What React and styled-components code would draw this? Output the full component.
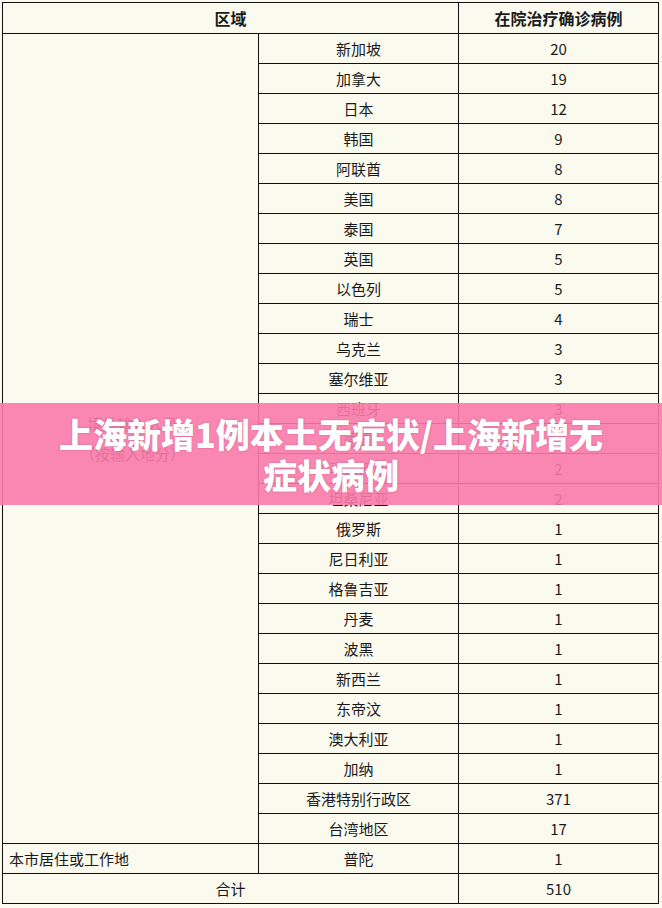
import React from 'react'
import styled, { createGlobalStyle } from 'styled-components'

const GlobalStyle = createGlobalStyle`
  html, body {
    margin: 0;
    padding: 0;
    background: #FBFAEF;
  }
`

const Page = styled.div`
  position: relative;
  width: 662px;
  height: 908px;
  padding: 2px 0 0 2px;
  box-sizing: border-box;
  font-family: "Noto Sans CJK SC", "Liberation Sans", sans-serif;
  color: #1a1a1a;
`

const Table = styled.table`
  border-collapse: collapse;
  table-layout: fixed;
  width: 656px;
`

const HeadCell = styled.th`
  height: 30px;
  padding: 0;
  border: 1px solid #111;
  font-size: 16px;
  font-weight: 700;
  text-align: center;
  line-height: 1;
`

const Cell = styled.td`
  height: 29px;
  padding: 0 ${({ $left }) => ($left ? '6px' : '0')};
  border: 1px solid #111;
  font-size: 15px;
  font-weight: 400;
  text-align: ${({ $left }) => ($left ? 'left' : 'center')};
  vertical-align: middle;
  line-height: 1;
`

const GroupLabel = styled.div`
  font-size: 15px;
  line-height: 30px;
  text-align: center;
  padding-left: 4px;
`

const Banner = styled.div`
  position: absolute;
  left: 0;
  right: 0;
  top: 403px;
  height: 102px;
  background: rgba(249, 122, 170, 0.9);
  display: flex;
  align-items: center;
  justify-content: center;
  padding: 0 30px;
`

const BannerTitle = styled.h1`
  margin: 0;
  color: #fff;
  font-family: "Noto Sans CJK SC", "Liberation Sans", sans-serif;
  font-weight: 900;
  font-size: 34px;
  line-height: 41px;
  text-align: center;
  text-shadow: 0 0 2px rgba(120, 20, 60, 0.35);
`

const rows = [
  ['新加坡', 20], ['加拿大', 19], ['日本', 12], ['韩国', 9], ['阿联酋', 8],
  ['美国', 8], ['泰国', 7], ['英国', 5], ['以色列', 5], ['瑞士', 4],
  ['乌克兰', 3], ['塞尔维亚', 3], ['西班牙', 3], ['德国', 3], ['马来西亚', 2],
  ['坦桑尼亚', 2], ['俄罗斯', 1], ['尼日利亚', 1], ['格鲁吉亚', 1], ['丹麦', 1],
  ['波黑', 1], ['新西兰', 1], ['东帝汶', 1], ['澳大利亚', 1], ['加纳', 1],
  ['香港特别行政区', 371], ['台湾地区', 17],
]

export default function App() {
  return (
    <Page>
      <GlobalStyle />
      <Table>
        <colgroup>
          <col style={{ width: 256 }} />
          <col style={{ width: 200 }} />
          <col style={{ width: 200 }} />
        </colgroup>
        <thead>
          <tr>
            <HeadCell colSpan={2}>区域</HeadCell>
            <HeadCell>在院治疗确诊病例</HeadCell>
          </tr>
        </thead>
        <tbody>
          {rows.map(([name, count], i) => (
            <tr key={name}>
              {i === 0 && (
                <Cell rowSpan={rows.length}>
                  <GroupLabel>境外输入人员<br />（按输入地分）</GroupLabel>
                </Cell>
              )}
              <Cell>{name}</Cell>
              <Cell>{count}</Cell>
            </tr>
          ))}
          <tr>
            <Cell $left>本市居住或工作地</Cell>
            <Cell>普陀</Cell>
            <Cell>1</Cell>
          </tr>
          <tr>
            <Cell colSpan={2}>合计</Cell>
            <Cell>510</Cell>
          </tr>
        </tbody>
      </Table>
      <Banner>
        <BannerTitle>上海新增1例本土无症状/上海新增无<br />症状病例</BannerTitle>
      </Banner>
    </Page>
  )
}
